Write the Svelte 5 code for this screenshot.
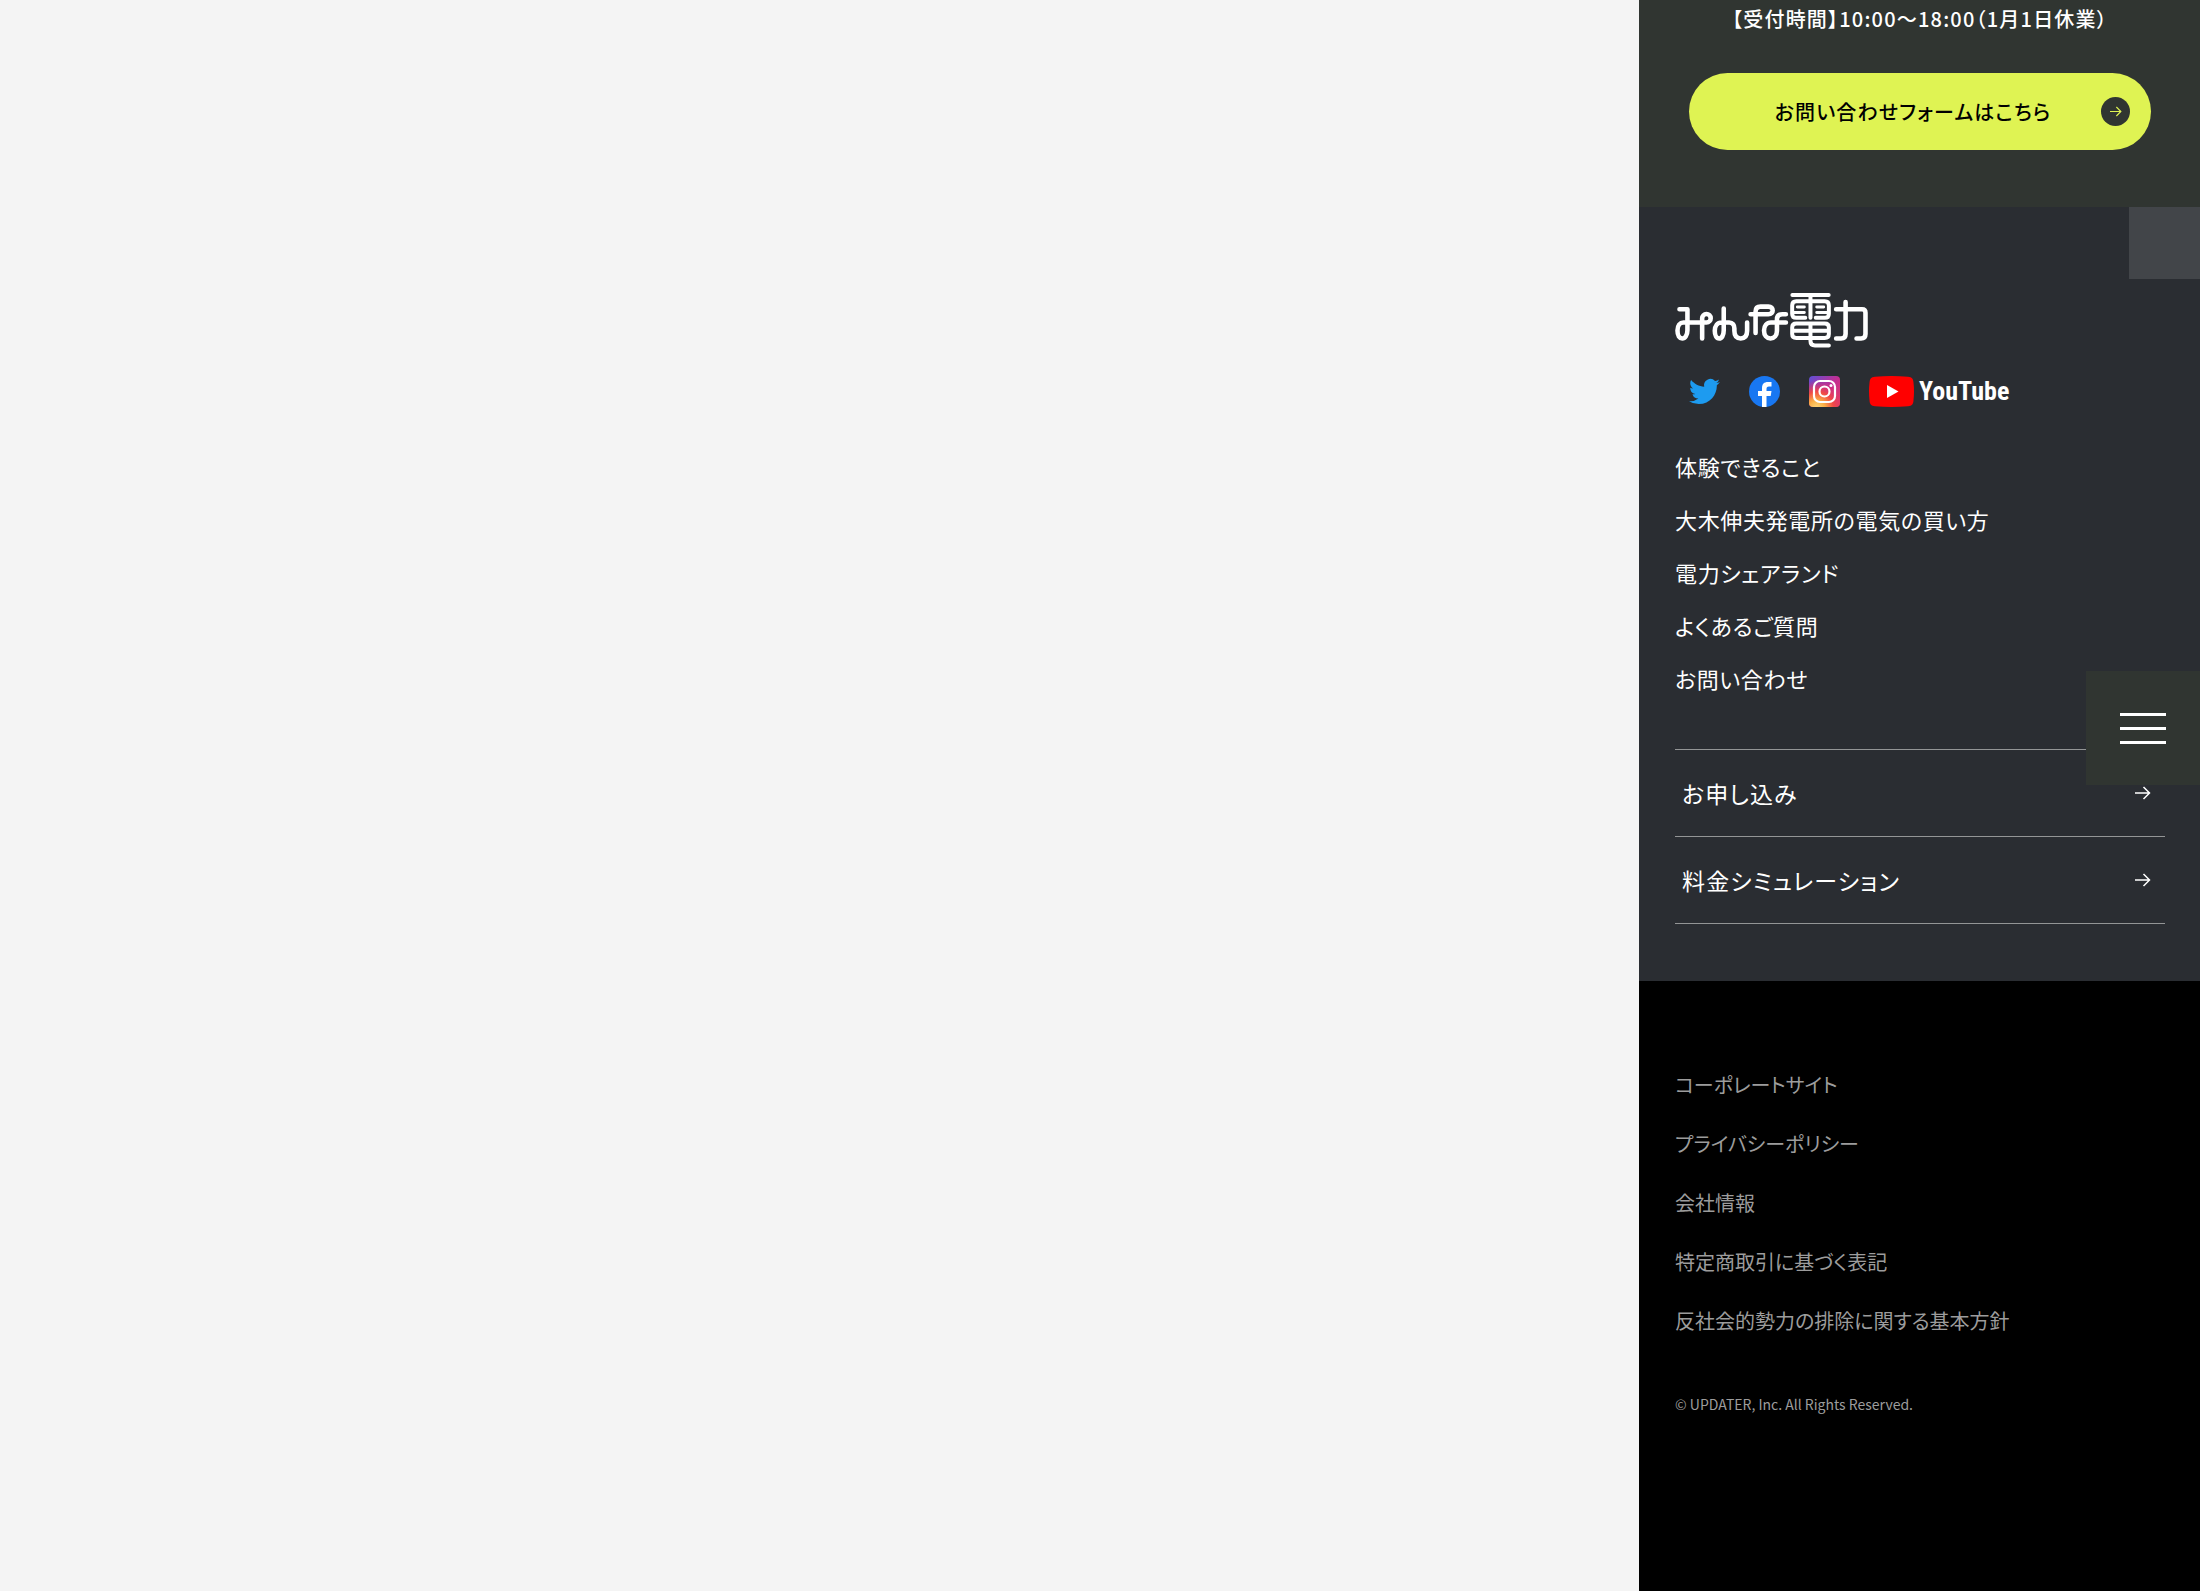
<script lang="ts">
	const mainLinks = [
		'体験できること',
		'大木伸夫発電所の電気の買い方',
		'電力シェアランド',
		'よくあるご質問',
		'お問い合わせ'
	];
	const actionLinks = ['お申し込み', '料金シミュレーション'];
	const subLinks = [
		'コーポレートサイト',
		'プライバシーポリシー',
		'会社情報',
		'特定商取引に基づく表記',
		'反社会的勢力の排除に関する基本方針'
	];

	let menuOpen = $state(false);
</script>

{#snippet arrow()}
	<svg class="arrow" viewBox="0 0 16 14" aria-hidden="true">
		<path d="M0 7h15M8.5 1l6 6-6 6" fill="none" stroke="currentColor" stroke-width="1.5" />
	</svg>
{/snippet}

<div class="page">
	<main class="canvas"></main>

	<div class="side">
		<section class="contact">
			<p class="hours">【受付時間】10:00〜18:00（1月1日休業）</p>
			<a class="form-button" href="#contact">
				<span class="form-label">お問い合わせフォームはこちら</span>
				<span class="form-icon">{@render arrow()}</span>
			</a>
		</section>

		<footer>
			<div class="guide">
				<a class="page-top" href="#top" aria-label="ページの先頭へ"></a>

				<a class="logo" href="#home" aria-label="みんな電力">
					<svg viewBox="0 0 194 56" aria-hidden="true">
						<g fill="none" stroke="#fff" stroke-width="4.6" stroke-linecap="round" stroke-linejoin="round">
							<path d="M4.500 17.300h8v21.200c0 5-2.500 8.200-5.200 8.200S2.500 44 2.500 38.800s2.500-8.100 6-8.100h23.200a4.300 4.300 0 1 0-4.400-4.300v20.300" />
							<path d="M49 16.700v21.800c0 5-2 8.200-4.600 8.200s-4.400-3-4.400-7.700 2.500-8.300 7-8.300h7.500c3.500 0 5.200 2.500 5.200 6V39c0 4.700 2 7.700 6.400 7.700s6.400-3 6.400-7.700v-8.300" />
							<path d="M76 22.300h18c2.700 0 4.200-1.700 4.200-3.800s-1.500-3.800-4.200-3.800h-8c-3.300 0-5 2-5 5v21.600M111.500 22.300H108c-3.700 0-5.500 2-5.500 5.500v10.900c0 5-2.700 8-6.500 8s-6.500-3-6.500-8 2.700-8 7-8h15" />
							<g stroke-width="4">
								<path d="M118 3h36.500M136.200 3v23" />
								<path d="M131 26h-9c-3 0-4.200-1.500-4.200-4.200v-8.300c0-2.700 1.500-4.200 4.200-4.200h28.500c2.700 0 4.200 1.500 4.200 4.200v8.300c0 2.700-1.200 4.200-4.200 4.200h-9" />
								<path stroke-width="3" d="M123 15h7M119 20.500h11M142.500 15h7M142.500 20.500h11" />
								<path d="M122 31.700h28.500c2.700 0 4.200 1.300 4.200 4v6.600c0 2.700-1.500 4-4.200 4H122c-2.700 0-4.200-1.300-4.200-4v-6.600c0-2.700 1.500-4 4.200-4zM118 39h36.500M136.200 31.700v17.500c0 3 1.500 4.500 4.500 4.500h14" />
							</g>
							<path d="M162 17.300h26c2.300 0 3.500 1.200 3.500 3.500v21.400c0 3-1.500 4.500-4.500 4.500h-4.500M171.500 10v32.200c0 3-1.500 4.500-4.500 4.500h-5" />
						</g>
					</svg>
				</a>

				<div class="sns">
					<a href="#twitter" aria-label="Twitter">
						<svg class="sns-icon" viewBox="0 0 24 24" aria-hidden="true">
							<path fill="#1d9bf0" d="M23.95 4.57a10 10 0 0 1-2.82.77 4.96 4.96 0 0 0 2.16-2.72c-.95.55-2 .96-3.13 1.18a4.92 4.92 0 0 0-8.38 4.48C7.69 8.1 4.07 6.13 1.64 3.16a4.82 4.82 0 0 0-.67 2.48c0 1.71.87 3.21 2.19 4.1a4.9 4.9 0 0 1-2.23-.62v.06a4.92 4.92 0 0 0 3.95 4.83 5 5 0 0 1-2.21.08 4.94 4.94 0 0 0 4.6 3.42A9.87 9.87 0 0 1 0 19.54a13.99 13.99 0 0 0 7.55 2.21c9.05 0 14-7.5 14-13.98 0-.21 0-.42-.02-.63a9.94 9.94 0 0 0 2.42-2.57z" />
						</svg>
					</a>
					<a href="#facebook" aria-label="Facebook">
						<svg class="sns-icon" viewBox="0 0 31 31" aria-hidden="true">
							<circle cx="15.5" cy="15.5" r="15.5" fill="#1877f2" />
							<path fill="#fff" d="M13 31V20H9v-5h4v-3c0-4 2-6 6-6h3.500v4.500H20c-2 0-2.500 1-2.500 2.500v2h5l-.8 5h-4.200v11z" />
						</svg>
					</a>
					<a href="#instagram" aria-label="Instagram">
						<svg class="sns-icon" viewBox="0 0 31 31" aria-hidden="true">
							<defs>
								<linearGradient id="insta-base" x1="0" y1="0" x2="1" y2="1">
									<stop offset="0" stop-color="#5b51d8" />
									<stop offset="0.5" stop-color="#c32e92" />
									<stop offset="1" stop-color="#e4405f" />
								</linearGradient>
								<radialGradient id="insta-glow" cx="0.25" cy="1.05" r="0.9">
									<stop offset="0" stop-color="#ffdc80" />
									<stop offset="0.3" stop-color="#fcaf45" />
									<stop offset="0.6" stop-color="#f04a45" />
									<stop offset="1" stop-color="#e1306c" stop-opacity="0" />
								</radialGradient>
							</defs>
							<rect width="31" height="31" rx="4" fill="url(#insta-base)" />
							<rect width="31" height="31" rx="4" fill="url(#insta-glow)" />
							<g fill="none" stroke="#fff" stroke-width="2.2">
								<rect x="5" y="5" width="21" height="21" rx="6" />
								<circle cx="15.5" cy="15.5" r="5" />
							</g>
							<circle cx="22" cy="9.5" r="1.5" fill="#fff" />
						</svg>
					</a>
					<a class="youtube" href="#youtube">
						<svg class="youtube-icon" viewBox="0 0 45 31" aria-hidden="true">
							<path fill="#f00" d="M6 .8Q22.500-.8 39 .8c4 .4 5 2 5.400 5q1.200 9.700 0 19.400c-.4 3-1.400 4.600-5.400 5q-16.500 1.600-33 0c-4-.4-5-2-5.400-5q-1.200-9.700 0-19.400C1 2.800 2 1.200 6 .8z" />
							<path fill="#fff" d="M18 9v13l11.500-6.500z" />
						</svg>
						<span class="youtube-name">YouTube</span>
					</a>
				</div>

				<ul class="main-links">
					{#each mainLinks as label}
						<li><a href="#guide">{label}</a></li>
					{/each}
				</ul>

				<ul class="action-links">
					{#each actionLinks as label}
						<li>
							<a href="#apply">{label}{@render arrow()}</a>
						</li>
					{/each}
				</ul>
			</div>

			<div class="company">
				<ul class="sub-links">
					{#each subLinks as label}
						<li><a href="#company">{label}</a></li>
					{/each}
				</ul>
				<small class="copyright">© UPDATER, Inc. All Rights Reserved.</small>
			</div>
		</footer>
	</div>

	<button
		class="menu-button"
		type="button"
		aria-label="メニュー"
		aria-expanded={menuOpen}
		onclick={() => (menuOpen = !menuOpen)}
	>
		<span></span>
		<span></span>
		<span></span>
	</button>
</div>

<style>
	:global(body) {
		margin: 0;
		background: #f4f4f4;
	}

	.page {
		display: flex;
		min-height: 100vh;
		font-family: 'Noto Sans CJK JP', sans-serif;
		font-feature-settings: 'palt';
		color: #fff;
	}

	.canvas {
		flex: 1;
	}

	.side {
		display: flex;
		flex-direction: column;
		width: 25.5%;
		background: #000;
	}

	a {
		color: inherit;
		text-decoration: none;
	}

	ul {
		margin: 0;
		padding: 0;
		list-style: none;
	}

	svg {
		display: block;
	}

	.arrow {
		width: 16px;
		height: 14px;
	}

	.contact {
		padding: 4px 49px 57px 50px;
		background: #303531;
	}

	.hours {
		margin: 0 0 39px;
		font-size: 20px;
		font-weight: 500;
		line-height: 30px;
		letter-spacing: 0.06em;
		text-align: center;
		white-space: nowrap;
	}

	.form-button {
		display: flex;
		align-items: center;
		height: 77px;
		padding-right: 21px;
		border-radius: 39px;
		background: #dff353;
		color: #000;
	}

	.form-label {
		flex: 1;
		padding-left: 36px;
		font-size: 20px;
		font-weight: 500;
		letter-spacing: 0.06em;
		text-align: center;
	}

	.form-icon {
		display: grid;
		place-items: center;
		width: 29px;
		height: 29px;
		border-radius: 50%;
		background: #303531;
		color: #dff353;
	}

	.form-icon .arrow {
		width: 12px;
		height: 11px;
	}

	.guide {
		position: relative;
		padding: 85px 35px 57px 36px;
		background: #2a2d32;
	}

	.page-top {
		position: absolute;
		top: 0;
		right: 0;
		width: 71px;
		height: 72px;
		background: #424549;
	}

	.logo {
		display: block;
		width: 193px;
	}

	.sns {
		display: flex;
		align-items: center;
		gap: 29px;
		margin: 28px 0 0 14px;
	}

	.sns-icon {
		width: 31px;
		height: 31px;
	}

	.youtube {
		display: flex;
		align-items: center;
		gap: 5px;
		height: 31px;
	}

	.youtube-icon {
		width: 45px;
		height: 31px;
	}

	.youtube-name {
		font-family: 'Roboto Condensed', 'Liberation Sans Narrow', 'Liberation Sans', sans-serif;
		font-size: 26px;
		font-weight: 700;
	}

	.main-links {
		display: grid;
		gap: 21px;
		margin-top: 43px;
		font-size: 22px;
		line-height: 32px;
		letter-spacing: 0.03em;
	}

	.action-links {
		margin-top: 55px;
		border-top: 1px solid #939596;
		font-size: 23px;
		letter-spacing: 0.05em;
	}

	.action-links a {
		display: flex;
		align-items: center;
		justify-content: space-between;
		height: 86px;
		padding: 0 14px 0 7px;
		border-bottom: 1px solid #939596;
	}

	.company {
		padding: 89px 36px;
		color: #9c9c9c;
	}

	.sub-links {
		display: grid;
		gap: 29px;
		font-size: 20px;
		line-height: 30px;
	}

	.copyright {
		display: block;
		margin-top: 58px;
		font-size: 14px;
		line-height: 20px;
	}

	.menu-button {
		position: fixed;
		top: 671px;
		right: 0;
		display: flex;
		flex-direction: column;
		align-items: center;
		justify-content: center;
		gap: 11px;
		width: 114px;
		height: 114px;
		padding: 0;
		border: 0;
		background: #303531;
		cursor: pointer;
	}

	.menu-button span {
		width: 46px;
		height: 3px;
		background: #fff;
	}
</style>
